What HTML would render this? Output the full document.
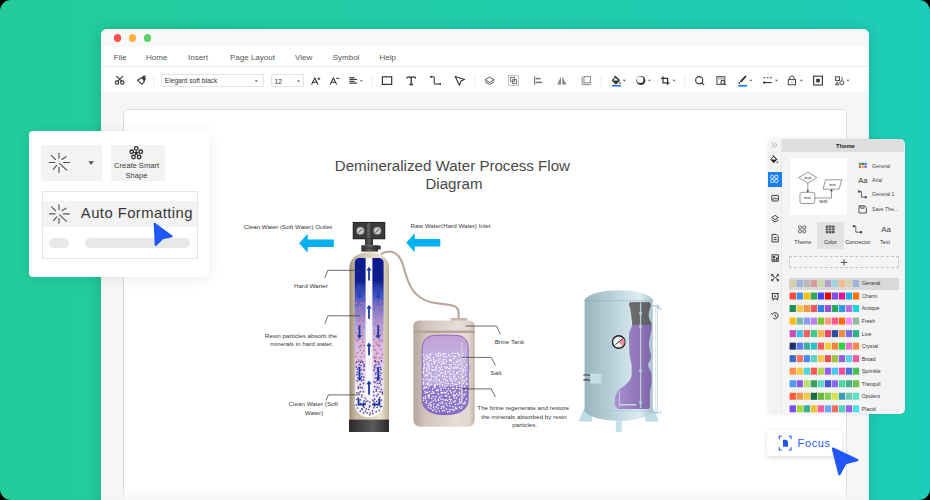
<!DOCTYPE html>
<html><head><meta charset="utf-8">
<style>
*{margin:0;padding:0;box-sizing:border-box}
html,body{width:930px;height:500px;overflow:hidden;background:#000}
body{position:relative;font-family:"Liberation Sans",sans-serif}
.a{position:absolute}
svg{position:absolute;left:0;top:0;overflow:visible}
#bg{left:0;top:0;width:930px;height:500px;border-radius:11px;background:linear-gradient(90deg,#23cc9a 0%,#22cdaa 50%,#1ecdb9 100%);overflow:hidden}
#win{left:101px;top:29px;width:768.2px;height:490px;background:#f5f6f8;border-radius:6px 6px 0 0;box-shadow:0 1px 14px rgba(0,50,35,.2);overflow:hidden}
#title{left:0;top:0;width:769px;height:18.2px;background:#f8f8f8}
.dot{width:7.2px;height:7.2px;border-radius:50%;top:5.4px}
#menu{left:0;top:18.2px;width:769px;height:19.4px;background:#fff;border-bottom:1px solid #ececec}
.mi{top:6.2px;font-size:8px;color:#555;white-space:nowrap}
#tools{left:0;top:38px;width:769px;height:25px;background:#fff}
#paper{left:22px;top:80px;width:724px;height:430px;background:#fff;border:1px solid #dedede;border-radius:5px}
.box{border:1px solid #e3e3e3;border-radius:2px;background:#fff}
</style></head><body>
<div id="bg" class="a">
 <div id="win" class="a">
  <div id="title" class="a">
   <div class="a dot" style="left:12.5px;background:#ff4f4f"></div>
   <div class="a dot" style="left:27.8px;background:#ffb142"></div>
   <div class="a dot" style="left:43px;background:#5ecf6a"></div>
  </div>
  <div id="menu" class="a">
   <div class="a mi" style="left:12.8px">File</div>
   <div class="a mi" style="left:45px">Home</div>
   <div class="a mi" style="left:87px">Insert</div>
   <div class="a mi" style="left:129px">Page Layout</div>
   <div class="a mi" style="left:194px">View</div>
   <div class="a mi" style="left:231.7px">Symbol</div>
   <div class="a mi" style="left:278.6px">Help</div>
  </div>
  <div id="tools" class="a"></div>
  <div id="paper" class="a"></div>
  <div class="a" style="left:0;top:457px;width:769px;height:14px;background:linear-gradient(180deg,rgba(246,247,249,0),rgba(244,245,247,.85))"></div>
 </div>
</div>

<!-- diagram -->
<svg width="930" height="500" viewBox="0 0 930 500">
 <defs>
  <linearGradient id="shell" x1="0" x2="1" y1="0" y2="0"><stop offset="0" stop-color="#9c8c78"/><stop offset=".14" stop-color="#c4b6a0"/><stop offset=".5" stop-color="#e0d4c0"/><stop offset=".8" stop-color="#ece2d0"/><stop offset="1" stop-color="#c0b09a"/></linearGradient>
  <linearGradient id="inner" x1="0" x2="0" y1="0" y2="1"><stop offset="0" stop-color="#0a1a8c"/><stop offset=".14" stop-color="#0e1e90"/><stop offset=".2" stop-color="#3444b4"/><stop offset=".3" stop-color="#6a6cd0"/><stop offset=".39" stop-color="#a496da"/><stop offset=".52" stop-color="#d2b4e4"/><stop offset=".64" stop-color="#dcc2e8"/><stop offset=".77" stop-color="#ecdcf2"/><stop offset=".89" stop-color="#f9f3fb"/><stop offset="1" stop-color="#ffffff"/></linearGradient>
  <linearGradient id="base" x1="0" x2="1"><stop offset="0" stop-color="#2a2a2a"/><stop offset=".6" stop-color="#5a5a5a"/><stop offset="1" stop-color="#2a2a2a"/></linearGradient>
  <linearGradient id="brine" x1="0" x2="1"><stop offset="0" stop-color="#b4a49c"/><stop offset=".2" stop-color="#d2c5be"/><stop offset=".7" stop-color="#e6ddd8"/><stop offset=".9" stop-color="#e2d8d2"/><stop offset="1" stop-color="#c4b4ac"/></linearGradient>
  <linearGradient id="salt" x1="0" x2="0" y1="0" y2="1"><stop offset="0" stop-color="#bfa2d8"/><stop offset=".2" stop-color="#c4acdc"/><stop offset=".21" stop-color="#c2b0e2"/><stop offset=".63" stop-color="#b6a6dc"/><stop offset=".64" stop-color="#8f78cc"/><stop offset="1" stop-color="#8870c8"/></linearGradient>
  <linearGradient id="hw" x1="0" x2="1"><stop offset="0" stop-color="#98b4bd"/><stop offset=".45" stop-color="#bcd4db"/><stop offset=".8" stop-color="#dcedf2"/><stop offset="1" stop-color="#a9c3cb"/></linearGradient>
  <linearGradient id="purp" x1="0" x2="1"><stop offset="0" stop-color="#ad95d6"/><stop offset="1" stop-color="#7d62a8"/></linearGradient>
 </defs>
 <!-- title -->
 <g font-family="Liberation Sans" fill="#484848" text-anchor="middle" font-size="15.1">
  <text x="452.4" y="170.6">Demineralized Water Process Flow</text>
  <text x="454" y="188.6">Diagram</text>
 </g>
 <g font-family="Liberation Sans" fill="#3a3a3a" font-size="6.25">
  <text x="243.8" y="229.3">Clean Water (Soft Water) Outlet</text>
  <text x="410.4" y="228.1">Raw Water(Hard Water) Inlet</text>
  <text x="294.1" y="288.1">Hard Warter</text>
  <text x="494.7" y="344.4">Brine Tank</text>
  <text x="490.6" y="375.1">Salt</text>
  <g text-anchor="middle">
   <text x="300.9" y="337.6">Resin particles absorb the</text>
   <text x="301.8" y="346.2">minerals in hard water.</text>
   <text x="313.3" y="406.4">Clean Water (Soft</text>
   <text x="314" y="415.1">Water)</text>
   <text x="523.2" y="409.8">The brine regenerate and restore</text>
   <text x="523.9" y="418.6">the minerals absorbed by resin</text>
   <text x="524.7" y="427.3">particles.</text>
  </g>
 </g>
 <!-- arrows -->
 <g fill="#00b0f0">
  <path d="M299.2 243.3L307.7 233.7V239.6H333.8V246.9H307.7V252.8Z"/>
  <path d="M406.2 242.7L414.8 233.2V238.9H440.3V246.6H414.8V252.2Z"/>
 </g>
 <!-- pipe -->
 <path d="M381 254.2C390 248.5 399 252 403 265C408 283 412 298 432 302.5C446 305.5 457.6 303 458.6 312V319" fill="none" stroke="#b9a49c" stroke-width="2.1"/>
 <!-- softener tank -->
 <linearGradient id="stem" x1="0" x2="1"><stop offset="0" stop-color="#2e2e2e"/><stop offset=".5" stop-color="#5a5a5a"/><stop offset="1" stop-color="#2e2e2e"/></linearGradient>
 <rect x="353.2" y="222.4" width="31.6" height="16.4" fill="#3d3939" stroke="#111" stroke-width=".9"/>
 <rect x="367.1" y="223" width="3.1" height="15.4" fill="#5c5c5c"/>
 <g><circle cx="360.4" cy="230.8" r="4" fill="#9a9a9a"/><circle cx="377.4" cy="230.8" r="4" fill="#9a9a9a"/>
 <circle cx="360.4" cy="230.8" r="3.1" fill="#c8c8c8"/><circle cx="377.4" cy="230.8" r="3.1" fill="#c8c8c8"/>
 <path d="M358.6 232.6l3.6 -3.6M375.6 232.6l3.6 -3.6" stroke="#222" stroke-width=".8"/></g>
 <rect x="365" y="239" width="8" height="6.4" fill="url(#stem)"/>
 <rect x="361.4" y="245.2" width="16.6" height="6.4" fill="url(#stem)"/>
 <path d="M361.4 248.2H377.8" stroke="#2a2a2a" stroke-width=".6"/>
 <rect x="377.4" y="245.6" width="3.4" height="4" rx="1.2" fill="#3a3a3a"/>
 <path d="M349.4 420V268C349.4 258 358 252.2 369.2 252.2C380.4 252.2 389 258 389 268V420z" fill="url(#shell)"/>
 <rect x="349" y="419.6" width="40" height="12.4" fill="url(#base)"/>
 <path d="M354.8 404V262.5a4.5 4.5 0 0 1 4.5 -4.5H379.1a4.5 4.5 0 0 1 4.5 4.5V404a13 13 0 0 1 -13 13h-2.8a13 13 0 0 1 -13 -13z" fill="url(#inner)"/>
 <g id="rd" fill="#c27888"><circle cx="356.4" cy="303.2" r="0.9"/><circle cx="361.1" cy="302.9" r="0.9"/><circle cx="363.3" cy="303.2" r="0.9"/><circle cx="375.7" cy="303.9" r="0.9"/><circle cx="380.9" cy="301.7" r="0.9"/><circle cx="359.6" cy="307.3" r="0.9"/><circle cx="362.0" cy="306.3" r="0.9"/><circle cx="364.0" cy="304.6" r="0.9"/><circle cx="373.9" cy="305.9" r="0.9"/><circle cx="378.4" cy="306.9" r="0.9"/><circle cx="382.1" cy="306.4" r="0.9"/><circle cx="356.5" cy="309.4" r="0.9"/><circle cx="359.8" cy="308.3" r="0.9"/><circle cx="377.7" cy="308.6" r="0.9"/><circle cx="381.3" cy="308.6" r="0.9"/><circle cx="359.5" cy="312.9" r="0.9"/><circle cx="360.2" cy="311.0" r="0.9"/><circle cx="376.0" cy="311.2" r="0.9"/><circle cx="377.4" cy="311.4" r="0.9"/><circle cx="358.8" cy="313.6" r="0.9"/><circle cx="364.1" cy="313.9" r="0.9"/><circle cx="375.8" cy="314.6" r="0.9"/><circle cx="379.5" cy="314.2" r="0.9"/><circle cx="359.5" cy="318.7" r="0.9"/><circle cx="361.0" cy="318.9" r="0.9"/><circle cx="364.2" cy="317.5" r="0.9"/><circle cx="374.4" cy="317.1" r="0.9"/><circle cx="379.4" cy="317.3" r="0.9"/><circle cx="381.4" cy="316.6" r="0.9"/><circle cx="359.2" cy="321.0" r="0.9"/><circle cx="362.9" cy="320.6" r="0.9"/><circle cx="378.1" cy="321.7" r="0.9"/><circle cx="379.6" cy="319.9" r="0.9"/><circle cx="358.9" cy="325.0" r="0.9"/><circle cx="360.7" cy="325.0" r="0.9"/><circle cx="374.5" cy="324.3" r="0.9"/><circle cx="377.9" cy="324.6" r="0.9"/><circle cx="382.3" cy="323.1" r="0.9"/><circle cx="358.7" cy="325.9" r="0.9"/><circle cx="363.5" cy="327.7" r="0.9"/><circle cx="376.7" cy="325.4" r="0.9"/><circle cx="379.4" cy="326.3" r="0.9"/><circle cx="358.4" cy="328.6" r="0.9"/><circle cx="361.2" cy="330.7" r="0.9"/><circle cx="373.8" cy="330.8" r="0.9"/><circle cx="379.2" cy="330.9" r="0.9"/><circle cx="380.6" cy="330.0" r="0.9"/><circle cx="356.4" cy="333.2" r="0.9"/><circle cx="359.4" cy="334.0" r="0.9"/><circle cx="362.1" cy="332.7" r="0.9"/><circle cx="374.3" cy="333.8" r="0.9"/><circle cx="376.5" cy="333.1" r="0.9"/><circle cx="381.4" cy="333.6" r="0.9"/><circle cx="358.0" cy="336.4" r="0.9"/><circle cx="362.6" cy="335.7" r="0.9"/><circle cx="376.6" cy="336.6" r="0.9"/><circle cx="379.3" cy="335.2" r="0.9"/><circle cx="356.3" cy="339.5" r="0.9"/><circle cx="358.7" cy="339.2" r="0.9"/><circle cx="362.0" cy="338.8" r="0.9"/><circle cx="373.8" cy="339.7" r="0.9"/><circle cx="376.2" cy="337.1" r="0.9"/><circle cx="379.7" cy="339.0" r="0.9"/><circle cx="357.4" cy="340.5" r="0.9"/><circle cx="362.8" cy="341.9" r="0.9"/><circle cx="376.1" cy="342.6" r="0.9"/><circle cx="379.7" cy="341.1" r="0.9"/><circle cx="382.2" cy="340.9" r="0.9"/><circle cx="360.9" cy="345.4" r="0.9"/><circle cx="363.9" cy="345.7" r="0.9"/><circle cx="377.3" cy="344.4" r="0.9"/><circle cx="379.8" cy="345.4" r="0.9"/><circle cx="359.6" cy="347.2" r="0.9"/><circle cx="360.4" cy="346.0" r="0.9"/><circle cx="373.8" cy="346.3" r="0.9"/><circle cx="378.5" cy="346.0" r="0.9"/><circle cx="360.3" cy="350.2" r="0.9"/><circle cx="363.7" cy="350.8" r="0.9"/><circle cx="373.4" cy="349.4" r="0.9"/><circle cx="375.5" cy="350.2" r="0.9"/><circle cx="380.9" cy="349.4" r="0.9"/><circle cx="357.5" cy="352.8" r="0.9"/><circle cx="362.2" cy="353.3" r="0.9"/><circle cx="376.4" cy="353.9" r="0.9"/><circle cx="377.5" cy="353.2" r="0.9"/><circle cx="382.4" cy="354.5" r="0.9"/><circle cx="356.1" cy="356.4" r="0.9"/><circle cx="361.0" cy="357.1" r="0.9"/><circle cx="364.6" cy="356.1" r="0.9"/><circle cx="373.9" cy="356.9" r="0.9"/><circle cx="376.1" cy="357.4" r="0.9"/><circle cx="381.7" cy="357.6" r="0.9"/><circle cx="358.3" cy="360.0" r="0.9"/><circle cx="361.1" cy="360.4" r="0.9"/><circle cx="375.2" cy="357.9" r="0.9"/><circle cx="379.5" cy="358.0" r="0.9"/><circle cx="356.0" cy="363.0" r="0.9"/><circle cx="358.9" cy="361.2" r="0.9"/><circle cx="363.3" cy="362.8" r="0.9"/><circle cx="374.8" cy="361.0" r="0.9"/><circle cx="376.1" cy="362.2" r="0.9"/><circle cx="379.7" cy="362.8" r="0.9"/></g>
 <g id="bd" fill="#4e46a6"><circle cx="356.9" cy="362.1" r="0.85"/><circle cx="360.5" cy="362.2" r="0.85"/><circle cx="362.2" cy="361.7" r="0.85"/><circle cx="375.3" cy="361.2" r="0.85"/><circle cx="378.3" cy="362.0" r="0.85"/><circle cx="381.6" cy="360.8" r="0.85"/><circle cx="359.3" cy="364.7" r="0.85"/><circle cx="360.9" cy="365.5" r="0.85"/><circle cx="364.4" cy="364.7" r="0.85"/><circle cx="374.7" cy="365.8" r="0.85"/><circle cx="376.0" cy="364.6" r="0.85"/><circle cx="378.8" cy="364.5" r="0.85"/><circle cx="356.4" cy="366.9" r="0.85"/><circle cx="358.8" cy="367.7" r="0.85"/><circle cx="363.8" cy="366.4" r="0.85"/><circle cx="374.7" cy="367.7" r="0.85"/><circle cx="377.2" cy="368.0" r="0.85"/><circle cx="380.3" cy="367.4" r="0.85"/><circle cx="357.4" cy="369.3" r="0.85"/><circle cx="361.2" cy="369.9" r="0.85"/><circle cx="363.9" cy="369.9" r="0.85"/><circle cx="373.9" cy="370.2" r="0.85"/><circle cx="377.6" cy="370.4" r="0.85"/><circle cx="380.7" cy="369.4" r="0.85"/><circle cx="357.5" cy="372.3" r="0.85"/><circle cx="359.1" cy="373.9" r="0.85"/><circle cx="362.0" cy="374.1" r="0.85"/><circle cx="376.0" cy="372.6" r="0.85"/><circle cx="379.0" cy="371.8" r="0.85"/><circle cx="381.0" cy="373.3" r="0.85"/><circle cx="356.8" cy="374.7" r="0.85"/><circle cx="361.6" cy="376.6" r="0.85"/><circle cx="375.6" cy="374.3" r="0.85"/><circle cx="379.9" cy="375.5" r="0.85"/><circle cx="360.5" cy="379.5" r="0.85"/><circle cx="363.8" cy="377.1" r="0.85"/><circle cx="375.1" cy="378.0" r="0.85"/><circle cx="378.5" cy="376.9" r="0.85"/><circle cx="381.8" cy="379.1" r="0.85"/><circle cx="357.2" cy="380.8" r="0.85"/><circle cx="361.8" cy="380.6" r="0.85"/><circle cx="363.5" cy="380.0" r="0.85"/><circle cx="374.1" cy="381.8" r="0.85"/><circle cx="377.0" cy="380.6" r="0.85"/><circle cx="380.0" cy="380.9" r="0.85"/><circle cx="360.2" cy="384.3" r="0.85"/><circle cx="363.5" cy="383.3" r="0.85"/><circle cx="375.7" cy="382.5" r="0.85"/><circle cx="377.8" cy="383.5" r="0.85"/><circle cx="380.0" cy="383.2" r="0.85"/><circle cx="358.4" cy="386.6" r="0.85"/><circle cx="360.5" cy="387.4" r="0.85"/><circle cx="374.9" cy="386.6" r="0.85"/><circle cx="377.2" cy="387.0" r="0.85"/><circle cx="381.0" cy="385.0" r="0.85"/><circle cx="358.4" cy="388.2" r="0.85"/><circle cx="362.4" cy="387.9" r="0.85"/><circle cx="376.4" cy="389.3" r="0.85"/><circle cx="379.0" cy="387.9" r="0.85"/><circle cx="381.6" cy="389.6" r="0.85"/><circle cx="356.9" cy="392.8" r="0.85"/><circle cx="360.3" cy="391.6" r="0.85"/><circle cx="363.4" cy="391.7" r="0.85"/><circle cx="373.6" cy="391.9" r="0.85"/><circle cx="376.3" cy="391.1" r="0.85"/><circle cx="380.2" cy="391.8" r="0.85"/><circle cx="382.3" cy="392.2" r="0.85"/><circle cx="358.9" cy="393.2" r="0.85"/><circle cx="361.8" cy="395.0" r="0.85"/><circle cx="374.0" cy="395.4" r="0.85"/><circle cx="378.0" cy="394.3" r="0.85"/><circle cx="382.5" cy="393.7" r="0.85"/><circle cx="358.1" cy="398.2" r="0.85"/><circle cx="361.7" cy="397.0" r="0.85"/><circle cx="365.5" cy="397.9" r="0.85"/><circle cx="376.7" cy="396.1" r="0.85"/><circle cx="379.6" cy="397.5" r="0.85"/><circle cx="356.7" cy="399.5" r="0.85"/><circle cx="360.3" cy="399.8" r="0.85"/><circle cx="364.0" cy="400.9" r="0.85"/><circle cx="366.4" cy="399.1" r="0.85"/><circle cx="367.9" cy="400.8" r="0.85"/><circle cx="372.7" cy="400.1" r="0.85"/><circle cx="374.7" cy="399.2" r="0.85"/><circle cx="378.7" cy="399.9" r="0.85"/><circle cx="381.5" cy="400.1" r="0.85"/><circle cx="358.7" cy="401.6" r="0.85"/><circle cx="360.5" cy="403.7" r="0.85"/><circle cx="365.3" cy="403.4" r="0.85"/><circle cx="366.2" cy="401.3" r="0.85"/><circle cx="369.9" cy="402.3" r="0.85"/><circle cx="373.9" cy="401.4" r="0.85"/><circle cx="376.8" cy="401.3" r="0.85"/><circle cx="378.7" cy="402.9" r="0.85"/><circle cx="356.2" cy="405.1" r="0.85"/><circle cx="358.8" cy="404.7" r="0.85"/><circle cx="363.3" cy="406.0" r="0.85"/><circle cx="364.7" cy="404.2" r="0.85"/><circle cx="369.7" cy="405.5" r="0.85"/><circle cx="372.7" cy="404.4" r="0.85"/><circle cx="374.9" cy="404.5" r="0.85"/><circle cx="379.0" cy="404.8" r="0.85"/><circle cx="381.7" cy="406.4" r="0.85"/><circle cx="357.6" cy="408.0" r="0.85"/><circle cx="361.8" cy="408.9" r="0.85"/><circle cx="364.1" cy="407.5" r="0.85"/><circle cx="366.3" cy="408.8" r="0.85"/><circle cx="369.4" cy="406.8" r="0.85"/><circle cx="373.7" cy="407.8" r="0.85"/><circle cx="377.1" cy="407.3" r="0.85"/><circle cx="380.5" cy="406.7" r="0.85"/><circle cx="360.2" cy="411.1" r="0.85"/><circle cx="362.1" cy="409.6" r="0.85"/><circle cx="365.4" cy="411.1" r="0.85"/><circle cx="368.6" cy="409.5" r="0.85"/><circle cx="372.5" cy="410.7" r="0.85"/><circle cx="376.2" cy="411.7" r="0.85"/><circle cx="379.3" cy="410.4" r="0.85"/><circle cx="363.6" cy="412.9" r="0.85"/><circle cx="367.0" cy="412.9" r="0.85"/><circle cx="370.2" cy="413.0" r="0.85"/><circle cx="372.8" cy="413.4" r="0.85"/><circle cx="369.7" cy="414.8" r="0.85"/></g>
 <path d="M365.6 258H372.4V397a3.4 3.4 0 0 1 -6.8 0z" fill="#fbf8fe"/>
 <g fill="#1c3aa6">
  <path d="M369 266.8l-2.6 3.6h1.7v10.2h1.8v-10.2h1.7z"/>
  <path d="M369 305l-2.6 3.6h1.7v10.2h1.8v-10.2h1.7z"/>
  <path d="M369 342.6l-2.6 3.6h1.7v9h1.8v-9h1.7z"/>
  <path d="M369 380.6l-2.6 3.6h1.7v10.6h1.8v-10.6h1.7z"/>
  <path d="M359.5 325.6v9.6h-1.7l2.6 3.6l2.6 -3.6h-1.7v-9.6z" transform="translate(-0.9 0)"/>
  <path d="M378.2 325.6v9.6h-1.7l2.6 3.6l2.6 -3.6h-1.7v-9.6z" transform="translate(-0.9 0)"/>
  <path d="M359.5 367v10.4h-1.7l2.6 3.6l2.6 -3.6h-1.7v-10.4z" transform="translate(-0.9 0)"/>
  <path d="M378.2 367v10.4h-1.7l2.6 3.6l2.6 -3.6h-1.7v-10.4z" transform="translate(-0.9 0)"/>
  <path d="M357.6 398.6h1.8v5h3.4v-1.8l3 2.7l-3 2.7v-1.8h-5.2z"/>
  <path d="M380.4 398.6h-1.8v5h-3.4v-1.8l-3 2.7l3 2.7v-1.8h5.2z"/>
 </g>
 <g fill="#2846b2">
  <path d="M358.3 284.4v10.8h-1.6l2.9 4l2.9 -4h-1.6v-10.8z"/>
  <path d="M377 284.4v10.8h-1.6l2.9 4l2.9 -4h-1.6v-10.8z"/>
 </g>
 <!-- leader lines -->
 <g fill="none" stroke="#3a3a3a" stroke-width=".75">
  <path d="M324.8 278L327.9 270.3H360.3"/>
  <path d="M324.8 323.9L327.9 315.8H360"/>
  <path d="M326 400.5L328.4 394.9H360.3"/>
 </g>
 <!-- brine tank -->
 <rect x="450.6" y="318" width="16.9" height="4" rx="1" fill="#c9b6ae"/>
 <path d="M413.4 426V326a5.5 5.5 0 0 1 5.5 -5.6H469.2a5.5 5.5 0 0 1 5.5 5.6V420a6.6 6.6 0 0 1 -6.6 6.7H420a6.6 6.6 0 0 1 -6.6 -6.7z" fill="url(#brine)"/>
 <rect x="413.4" y="330.6" width="61.3" height="2.4" fill="#b8a399"/>
 <path d="M433 335.6C440 334.8 452 335 458 335.6C464.5 336.4 468.2 341 468.2 348V362C469.2 365 469.2 370 468.2 373V400C468.2 409 460 414.7 445 414.7C430 414.7 422.2 409 422.2 400V350C422.2 341 426 336.3 433 335.6Z" fill="url(#salt)" stroke="#8c5fb0" stroke-width=".9"/>
 <g id="wd" fill="#fff"><circle cx="423.5" cy="354.7" r="0.8"/><circle cx="426.7" cy="355.2" r="0.8"/><circle cx="429.4" cy="355.1" r="0.8"/><circle cx="430.7" cy="354.1" r="0.8"/><circle cx="435.6" cy="354.5" r="0.8"/><circle cx="438.3" cy="353.4" r="0.8"/><circle cx="440.2" cy="353.7" r="0.8"/><circle cx="443.2" cy="354.4" r="0.8"/><circle cx="444.9" cy="353.6" r="0.8"/><circle cx="448.4" cy="355.1" r="0.8"/><circle cx="452.3" cy="353.5" r="0.8"/><circle cx="455.2" cy="353.4" r="0.8"/><circle cx="457.7" cy="353.4" r="0.8"/><circle cx="459.2" cy="355.0" r="0.8"/><circle cx="462.5" cy="353.6" r="0.8"/><circle cx="424.2" cy="357.7" r="0.8"/><circle cx="427.6" cy="357.1" r="0.8"/><circle cx="429.7" cy="357.6" r="0.8"/><circle cx="433.6" cy="357.7" r="0.8"/><circle cx="436.9" cy="356.2" r="0.8"/><circle cx="438.6" cy="356.0" r="0.8"/><circle cx="441.0" cy="355.7" r="0.8"/><circle cx="444.1" cy="356.9" r="0.8"/><circle cx="446.3" cy="357.1" r="0.8"/><circle cx="449.9" cy="356.3" r="0.8"/><circle cx="453.8" cy="356.6" r="0.8"/><circle cx="455.6" cy="356.6" r="0.8"/><circle cx="459.3" cy="355.7" r="0.8"/><circle cx="462.7" cy="355.6" r="0.8"/><circle cx="465.1" cy="357.4" r="0.8"/><circle cx="425.8" cy="359.3" r="0.8"/><circle cx="427.8" cy="358.2" r="0.8"/><circle cx="431.1" cy="360.1" r="0.8"/><circle cx="433.9" cy="359.7" r="0.8"/><circle cx="438.4" cy="360.1" r="0.8"/><circle cx="440.0" cy="358.8" r="0.8"/><circle cx="443.2" cy="359.8" r="0.8"/><circle cx="445.2" cy="359.7" r="0.8"/><circle cx="449.5" cy="359.9" r="0.8"/><circle cx="450.7" cy="360.1" r="0.8"/><circle cx="453.7" cy="358.8" r="0.8"/><circle cx="457.6" cy="360.1" r="0.8"/><circle cx="459.9" cy="360.1" r="0.8"/><circle cx="463.2" cy="358.8" r="0.8"/><circle cx="465.6" cy="358.5" r="0.8"/><circle cx="423.7" cy="360.9" r="0.8"/><circle cx="427.9" cy="362.7" r="0.8"/><circle cx="429.6" cy="360.7" r="0.8"/><circle cx="434.2" cy="361.7" r="0.8"/><circle cx="435.8" cy="361.1" r="0.8"/><circle cx="439.1" cy="362.3" r="0.8"/><circle cx="441.6" cy="361.5" r="0.8"/><circle cx="443.6" cy="362.5" r="0.8"/><circle cx="446.4" cy="361.6" r="0.8"/><circle cx="451.0" cy="360.8" r="0.8"/><circle cx="453.6" cy="362.6" r="0.8"/><circle cx="456.3" cy="362.3" r="0.8"/><circle cx="458.0" cy="361.5" r="0.8"/><circle cx="460.9" cy="362.4" r="0.8"/><circle cx="464.1" cy="361.5" r="0.8"/><circle cx="424.3" cy="364.9" r="0.8"/><circle cx="427.1" cy="364.0" r="0.8"/><circle cx="428.9" cy="364.6" r="0.8"/><circle cx="431.7" cy="363.7" r="0.8"/><circle cx="434.4" cy="363.4" r="0.8"/><circle cx="437.2" cy="365.2" r="0.8"/><circle cx="441.3" cy="364.4" r="0.8"/><circle cx="443.1" cy="363.8" r="0.8"/><circle cx="445.1" cy="363.6" r="0.8"/><circle cx="449.5" cy="364.9" r="0.8"/><circle cx="451.4" cy="364.7" r="0.8"/><circle cx="455.1" cy="364.5" r="0.8"/><circle cx="457.8" cy="364.7" r="0.8"/><circle cx="460.0" cy="364.6" r="0.8"/><circle cx="462.6" cy="364.1" r="0.8"/><circle cx="466.5" cy="364.5" r="0.8"/><circle cx="424.2" cy="367.6" r="0.8"/><circle cx="427.8" cy="366.8" r="0.8"/><circle cx="429.3" cy="366.7" r="0.8"/><circle cx="432.6" cy="367.0" r="0.8"/><circle cx="435.9" cy="367.3" r="0.8"/><circle cx="439.2" cy="367.2" r="0.8"/><circle cx="441.4" cy="366.9" r="0.8"/><circle cx="445.1" cy="367.3" r="0.8"/><circle cx="447.1" cy="367.3" r="0.8"/><circle cx="451.1" cy="367.0" r="0.8"/><circle cx="454.2" cy="367.6" r="0.8"/><circle cx="456.0" cy="366.7" r="0.8"/><circle cx="458.1" cy="367.3" r="0.8"/><circle cx="462.6" cy="366.5" r="0.8"/><circle cx="464.9" cy="367.1" r="0.8"/><circle cx="423.7" cy="368.4" r="0.8"/><circle cx="426.7" cy="369.3" r="0.8"/><circle cx="429.3" cy="368.9" r="0.8"/><circle cx="432.0" cy="369.7" r="0.8"/><circle cx="434.9" cy="369.6" r="0.8"/><circle cx="436.4" cy="368.3" r="0.8"/><circle cx="440.2" cy="369.4" r="0.8"/><circle cx="442.5" cy="369.5" r="0.8"/><circle cx="446.3" cy="368.1" r="0.8"/><circle cx="448.8" cy="368.5" r="0.8"/><circle cx="450.7" cy="368.3" r="0.8"/><circle cx="454.2" cy="368.4" r="0.8"/><circle cx="456.7" cy="368.1" r="0.8"/><circle cx="460.2" cy="368.8" r="0.8"/><circle cx="463.3" cy="369.3" r="0.8"/><circle cx="465.4" cy="370.0" r="0.8"/><circle cx="423.5" cy="371.4" r="0.8"/><circle cx="427.0" cy="371.4" r="0.8"/><circle cx="429.5" cy="372.3" r="0.8"/><circle cx="432.9" cy="370.6" r="0.8"/><circle cx="436.3" cy="370.7" r="0.8"/><circle cx="439.0" cy="371.2" r="0.8"/><circle cx="441.9" cy="372.5" r="0.8"/><circle cx="445.3" cy="371.4" r="0.8"/><circle cx="448.1" cy="371.9" r="0.8"/><circle cx="450.0" cy="370.8" r="0.8"/><circle cx="453.3" cy="371.7" r="0.8"/><circle cx="457.0" cy="372.6" r="0.8"/><circle cx="459.1" cy="371.2" r="0.8"/><circle cx="462.5" cy="370.5" r="0.8"/><circle cx="463.7" cy="371.7" r="0.8"/><circle cx="423.4" cy="373.3" r="0.8"/><circle cx="426.3" cy="374.9" r="0.8"/><circle cx="428.6" cy="373.9" r="0.8"/><circle cx="431.2" cy="373.6" r="0.8"/><circle cx="435.6" cy="373.8" r="0.8"/><circle cx="438.4" cy="374.9" r="0.8"/><circle cx="440.5" cy="373.5" r="0.8"/><circle cx="444.2" cy="374.0" r="0.8"/><circle cx="445.8" cy="373.6" r="0.8"/><circle cx="449.9" cy="374.0" r="0.8"/><circle cx="451.2" cy="374.0" r="0.8"/><circle cx="453.7" cy="374.3" r="0.8"/><circle cx="457.3" cy="373.6" r="0.8"/><circle cx="460.9" cy="374.7" r="0.8"/><circle cx="462.0" cy="374.1" r="0.8"/><circle cx="465.5" cy="375.0" r="0.8"/><circle cx="425.2" cy="376.0" r="0.8"/><circle cx="427.0" cy="375.8" r="0.8"/><circle cx="431.4" cy="376.1" r="0.8"/><circle cx="433.4" cy="376.5" r="0.8"/><circle cx="436.3" cy="376.7" r="0.8"/><circle cx="439.4" cy="375.7" r="0.8"/><circle cx="442.3" cy="376.1" r="0.8"/><circle cx="444.6" cy="376.2" r="0.8"/><circle cx="447.0" cy="376.6" r="0.8"/><circle cx="450.2" cy="376.2" r="0.8"/><circle cx="453.7" cy="376.7" r="0.8"/><circle cx="455.0" cy="376.0" r="0.8"/><circle cx="458.7" cy="377.4" r="0.8"/><circle cx="462.5" cy="376.6" r="0.8"/><circle cx="463.5" cy="377.1" r="0.8"/><circle cx="423.0" cy="379.2" r="0.8"/><circle cx="426.5" cy="379.3" r="0.8"/><circle cx="428.9" cy="379.9" r="0.8"/><circle cx="431.5" cy="378.8" r="0.8"/><circle cx="435.4" cy="378.3" r="0.8"/><circle cx="437.0" cy="379.7" r="0.8"/><circle cx="439.4" cy="379.7" r="0.8"/><circle cx="443.6" cy="378.8" r="0.8"/><circle cx="445.5" cy="379.6" r="0.8"/><circle cx="449.7" cy="378.2" r="0.8"/><circle cx="451.7" cy="379.1" r="0.8"/><circle cx="454.5" cy="378.6" r="0.8"/><circle cx="456.6" cy="379.2" r="0.8"/><circle cx="460.9" cy="378.1" r="0.8"/><circle cx="462.5" cy="379.7" r="0.8"/><circle cx="466.6" cy="379.3" r="0.8"/><circle cx="423.6" cy="382.0" r="0.8"/><circle cx="428.5" cy="382.6" r="0.8"/><circle cx="430.8" cy="380.5" r="0.8"/><circle cx="433.9" cy="380.9" r="0.8"/><circle cx="436.3" cy="382.5" r="0.8"/><circle cx="439.3" cy="380.7" r="0.8"/><circle cx="441.3" cy="382.4" r="0.8"/><circle cx="443.8" cy="381.7" r="0.8"/><circle cx="447.2" cy="380.7" r="0.8"/><circle cx="450.5" cy="380.5" r="0.8"/><circle cx="452.3" cy="381.2" r="0.8"/><circle cx="455.0" cy="380.5" r="0.8"/><circle cx="459.0" cy="382.0" r="0.8"/><circle cx="462.5" cy="380.7" r="0.8"/><circle cx="464.4" cy="381.1" r="0.8"/><circle cx="423.4" cy="383.9" r="0.8"/><circle cx="427.0" cy="383.7" r="0.8"/><circle cx="427.9" cy="384.4" r="0.8"/><circle cx="431.0" cy="384.2" r="0.8"/><circle cx="434.6" cy="384.8" r="0.8"/><circle cx="437.6" cy="384.2" r="0.8"/><circle cx="439.8" cy="384.1" r="0.8"/><circle cx="442.6" cy="384.5" r="0.8"/><circle cx="446.0" cy="383.2" r="0.8"/><circle cx="448.3" cy="383.7" r="0.8"/><circle cx="452.2" cy="383.3" r="0.8"/><circle cx="455.0" cy="384.3" r="0.8"/><circle cx="456.5" cy="384.3" r="0.8"/><circle cx="459.4" cy="383.1" r="0.8"/><circle cx="463.3" cy="383.4" r="0.8"/><circle cx="466.8" cy="383.9" r="0.8"/><circle cx="424.2" cy="387.1" r="0.8"/><circle cx="426.5" cy="386.9" r="0.8"/><circle cx="429.4" cy="385.7" r="0.8"/><circle cx="434.2" cy="386.8" r="0.8"/><circle cx="435.4" cy="385.6" r="0.8"/><circle cx="439.9" cy="386.8" r="0.8"/><circle cx="442.4" cy="385.7" r="0.8"/><circle cx="444.8" cy="386.1" r="0.8"/><circle cx="446.9" cy="386.1" r="0.8"/><circle cx="450.5" cy="386.1" r="0.8"/><circle cx="452.9" cy="385.6" r="0.8"/><circle cx="456.7" cy="386.8" r="0.8"/><circle cx="459.5" cy="386.3" r="0.8"/><circle cx="462.4" cy="386.5" r="0.8"/><circle cx="464.7" cy="386.6" r="0.8"/><circle cx="423.7" cy="388.7" r="0.8"/><circle cx="425.2" cy="387.9" r="0.8"/><circle cx="428.3" cy="387.9" r="0.8"/><circle cx="432.6" cy="388.9" r="0.8"/><circle cx="435.2" cy="387.8" r="0.8"/><circle cx="437.4" cy="389.8" r="0.8"/><circle cx="440.6" cy="388.8" r="0.8"/><circle cx="443.1" cy="388.0" r="0.8"/><circle cx="445.3" cy="388.2" r="0.8"/><circle cx="448.6" cy="388.7" r="0.8"/><circle cx="452.5" cy="388.2" r="0.8"/><circle cx="454.0" cy="388.4" r="0.8"/><circle cx="456.7" cy="388.5" r="0.8"/><circle cx="459.7" cy="388.9" r="0.8"/><circle cx="462.1" cy="389.8" r="0.8"/><circle cx="465.7" cy="389.9" r="0.8"/><circle cx="425.0" cy="391.8" r="0.8"/><circle cx="427.4" cy="392.4" r="0.8"/><circle cx="429.5" cy="391.8" r="0.8"/><circle cx="432.7" cy="391.8" r="0.8"/><circle cx="436.5" cy="390.7" r="0.8"/><circle cx="438.2" cy="390.4" r="0.8"/><circle cx="441.1" cy="390.5" r="0.8"/><circle cx="444.4" cy="392.4" r="0.8"/><circle cx="447.1" cy="391.0" r="0.8"/><circle cx="450.2" cy="390.9" r="0.8"/><circle cx="453.6" cy="391.9" r="0.8"/><circle cx="455.2" cy="390.8" r="0.8"/><circle cx="459.2" cy="392.3" r="0.8"/><circle cx="462.0" cy="391.2" r="0.8"/><circle cx="465.6" cy="390.3" r="0.8"/><circle cx="425.9" cy="392.9" r="0.8"/><circle cx="429.0" cy="394.9" r="0.8"/><circle cx="431.8" cy="393.5" r="0.8"/><circle cx="433.7" cy="392.9" r="0.8"/><circle cx="438.3" cy="393.9" r="0.8"/><circle cx="441.2" cy="392.9" r="0.8"/><circle cx="442.6" cy="392.9" r="0.8"/><circle cx="445.8" cy="392.9" r="0.8"/><circle cx="448.3" cy="393.7" r="0.8"/><circle cx="451.3" cy="392.9" r="0.8"/><circle cx="453.5" cy="394.9" r="0.8"/><circle cx="456.7" cy="393.9" r="0.8"/><circle cx="460.0" cy="393.9" r="0.8"/><circle cx="462.2" cy="393.5" r="0.8"/><circle cx="465.1" cy="394.0" r="0.8"/><circle cx="425.5" cy="396.6" r="0.8"/><circle cx="428.2" cy="395.7" r="0.8"/><circle cx="429.3" cy="396.4" r="0.8"/><circle cx="433.1" cy="396.5" r="0.8"/><circle cx="435.8" cy="396.6" r="0.8"/><circle cx="439.4" cy="397.2" r="0.8"/><circle cx="441.3" cy="396.2" r="0.8"/><circle cx="445.3" cy="395.8" r="0.8"/><circle cx="446.6" cy="395.9" r="0.8"/><circle cx="449.4" cy="396.9" r="0.8"/><circle cx="453.8" cy="395.9" r="0.8"/><circle cx="455.2" cy="395.4" r="0.8"/><circle cx="458.3" cy="395.5" r="0.8"/><circle cx="461.5" cy="396.5" r="0.8"/><circle cx="464.0" cy="395.4" r="0.8"/><circle cx="423.6" cy="397.9" r="0.8"/><circle cx="425.4" cy="398.4" r="0.8"/><circle cx="428.6" cy="398.0" r="0.8"/><circle cx="431.6" cy="398.4" r="0.8"/><circle cx="435.1" cy="399.0" r="0.8"/><circle cx="438.3" cy="399.2" r="0.8"/><circle cx="440.9" cy="399.0" r="0.8"/><circle cx="443.0" cy="399.5" r="0.8"/><circle cx="446.3" cy="399.8" r="0.8"/><circle cx="449.3" cy="399.3" r="0.8"/><circle cx="451.2" cy="399.5" r="0.8"/><circle cx="454.3" cy="398.0" r="0.8"/><circle cx="456.5" cy="398.1" r="0.8"/><circle cx="459.7" cy="399.2" r="0.8"/><circle cx="462.6" cy="397.9" r="0.8"/><circle cx="466.5" cy="399.0" r="0.8"/><circle cx="423.6" cy="400.3" r="0.8"/><circle cx="426.7" cy="401.0" r="0.8"/><circle cx="431.1" cy="402.3" r="0.8"/><circle cx="433.4" cy="400.7" r="0.8"/><circle cx="435.9" cy="401.0" r="0.8"/><circle cx="438.5" cy="400.3" r="0.8"/><circle cx="441.9" cy="402.0" r="0.8"/><circle cx="445.1" cy="400.4" r="0.8"/><circle cx="447.5" cy="400.6" r="0.8"/><circle cx="450.7" cy="401.2" r="0.8"/><circle cx="454.1" cy="401.9" r="0.8"/><circle cx="455.1" cy="400.9" r="0.8"/><circle cx="459.7" cy="401.2" r="0.8"/><circle cx="461.5" cy="401.2" r="0.8"/><circle cx="465.1" cy="402.3" r="0.8"/><circle cx="426.3" cy="402.9" r="0.8"/><circle cx="429.6" cy="403.6" r="0.8"/><circle cx="430.8" cy="404.8" r="0.8"/><circle cx="433.6" cy="404.0" r="0.8"/><circle cx="437.4" cy="404.6" r="0.8"/><circle cx="440.1" cy="403.2" r="0.8"/><circle cx="442.7" cy="403.1" r="0.8"/><circle cx="446.1" cy="403.5" r="0.8"/><circle cx="449.4" cy="403.2" r="0.8"/><circle cx="451.4" cy="403.2" r="0.8"/><circle cx="455.6" cy="404.5" r="0.8"/><circle cx="458.2" cy="404.0" r="0.8"/><circle cx="460.0" cy="403.0" r="0.8"/><circle cx="463.8" cy="403.8" r="0.8"/><circle cx="464.9" cy="403.1" r="0.8"/><circle cx="428.3" cy="405.6" r="0.8"/><circle cx="431.0" cy="405.9" r="0.8"/><circle cx="433.6" cy="407.1" r="0.8"/><circle cx="436.3" cy="406.9" r="0.8"/><circle cx="438.6" cy="405.2" r="0.8"/><circle cx="441.8" cy="406.5" r="0.8"/><circle cx="443.9" cy="406.0" r="0.8"/><circle cx="447.0" cy="405.2" r="0.8"/><circle cx="449.9" cy="406.0" r="0.8"/><circle cx="453.1" cy="406.7" r="0.8"/><circle cx="455.8" cy="407.3" r="0.8"/><circle cx="459.5" cy="407.2" r="0.8"/><circle cx="462.1" cy="406.6" r="0.8"/><circle cx="428.4" cy="407.8" r="0.8"/><circle cx="430.9" cy="408.4" r="0.8"/><circle cx="434.8" cy="409.3" r="0.8"/><circle cx="437.9" cy="408.3" r="0.8"/><circle cx="441.2" cy="408.3" r="0.8"/><circle cx="443.6" cy="407.8" r="0.8"/><circle cx="446.5" cy="409.1" r="0.8"/><circle cx="449.8" cy="409.6" r="0.8"/><circle cx="452.1" cy="409.5" r="0.8"/><circle cx="455.1" cy="409.0" r="0.8"/><circle cx="456.8" cy="408.8" r="0.8"/><circle cx="461.1" cy="408.2" r="0.8"/><circle cx="432.9" cy="410.4" r="0.8"/><circle cx="436.4" cy="411.3" r="0.8"/><circle cx="439.3" cy="411.0" r="0.8"/><circle cx="442.6" cy="410.6" r="0.8"/><circle cx="444.2" cy="410.7" r="0.8"/><circle cx="447.7" cy="412.1" r="0.8"/><circle cx="449.6" cy="411.5" r="0.8"/><circle cx="453.7" cy="410.6" r="0.8"/></g>
 <clipPath id="saltclip"><path d="M433 335.6C440 334.8 452 335 458 335.6C464.5 336.4 468.2 341 468.2 348V362C469.2 365 469.2 370 468.2 373V400C468.2 409 460 414.7 445 414.7C430 414.7 422.2 409 422.2 400V350C422.2 341 426 336.3 433 335.6Z"/></clipPath>
 <path d="M461.8 341.7V404" stroke="#cfcbd6" stroke-width="1.5"/>
 <g fill="none" stroke="#3a3a3a" stroke-width=".75">
  <path d="M465.5 326H496.5L500.3 334.2"/>
  <path d="M462 357.4H491.2L495.5 365.4"/>
  <path d="M462 388.9H491.2L495.5 397"/>
 </g>
 <!-- hot water tank -->
 <clipPath id="cut"><path d="M631 302.3H648.7Q650.7 302.3 650.7 304.3C650.5 309 648.2 312 648.5 316C648.8 320 651.7 322 651.7 326C651.7 332 649 338 649 344C649 350 651 352 651 357C651 361 648.2 362 648.2 365C648.2 368 650.7 370 651.2 373C651.6 377 651.6 380 651.6 382C651.6 386 649.9 389 649.9 393V407Q649.9 409 647.9 409H620C616.5 409 615 406.5 614.8 404C614.5 399.5 614.8 395.5 617.5 391.5C619.5 388.5 622.5 387.2 625 385.2C629 382 631.6 378.5 631.6 375C631.6 370 632 367 631.2 363C630.4 359 629.4 356 629.4 352C629.2 346 629 338 629 333C629.6 330 632.1 328 632.1 324C632.1 318 630.8 313 630.6 310C630.3 307 629 306 629 304.3Q629 302.3 631 302.3Z"/></clipPath>
 <linearGradient id="gry" x1="0" x2="1"><stop offset="0" stop-color="#7c7c7c"/><stop offset="1" stop-color="#5c5c5c"/></linearGradient>
 <path d="M578.4 421.5L585.5 405.5H591L592.5 421.5z" fill="#c2dce6"/>
 <path d="M659.2 421.5L652 405.5H646.5L645 421.5z" fill="#c2dce6"/>
 <rect x="615.8" y="412" width="6" height="19.8" fill="#c6dfe8"/>
 <path d="M584.6 299.5C590 293 604 290.2 619 290.2C634 290.2 648 293 652.8 299.5V411.5C648 418 634 420.8 619 420.8C604 420.8 590 418 584.6 411.5z" fill="url(#hw)"/>
 <path d="M584.6 300.7H652.8" stroke="#84adbb" stroke-width="1" stroke-dasharray="1.5 1.7"/><path d="M584.6 410.9H652.8" stroke="#9cc2d0" stroke-width="1" stroke-dasharray="1.5 1.7"/>
 <g clip-path="url(#cut)">
  <rect x="612" y="302" width="42" height="108" fill="url(#purp)"/>
  <rect x="612" y="302" width="42" height="22.8" fill="url(#gry)"/>
 </g>
 <path d="M640.6 302.6V408" stroke="#b9cdd8" stroke-width="1.3"/>
 <g fill="#b9cdd8"><rect x="639.3" y="311.5" width="2.6" height="3.4" rx=".6"/><rect x="639.3" y="324.6" width="2.6" height="3.4" rx=".6"/><rect x="639.3" y="369.2" width="2.6" height="3.4" rx=".6"/><rect x="639.3" y="400.8" width="2.6" height="3.4" rx=".6"/></g>
 <path d="M620.2 404.8H635.6" stroke="#d0d4e0" stroke-width="1.6" stroke-linecap="round"/><path d="M619.4 390.5V406.5" stroke="#c8ccd8" stroke-width="1"/>
 <circle cx="618.7" cy="342" r="6.2" fill="#f2f2f2" stroke="#1e1e1e" stroke-width="1.4"/>
 <path d="M618.7 342L623.4 338.2A5.4 5.4 0 0 1 622.6 345.9z" fill="#f08c9c"/>
 <path d="M615.4 344.6L622.8 338.6" stroke="#222" stroke-width=".9"/>
 <rect x="590.3" y="373.7" width="11.6" height="10.2" fill="#c7dde4" stroke="#a9c6cf" stroke-width=".5"/>
 <path d="M583.4 375.4c2 -1.2 4 -.6 6.4 .2M583.4 380.2c2 -1.2 4 -.6 6.4 .2" stroke="#3a3a3a" stroke-width="1.1" fill="none"/>
 <rect x="655.9" y="307" width="1.7" height="105.6" fill="#fbfdfe" stroke="#a9c4cd" stroke-width=".5"/>
 <path d="M652.6 305.6H657.4Q658.6 305.6 658.6 307V309M652.6 412.6H658.6" stroke="#a3c0ca" stroke-width="1.2" fill="none"/>
 <path d="M659.6 307.6L661.4 309L659.6 310.4M659.6 410.8L661.4 412.2L659.6 413.6" stroke="#a3c0ca" stroke-width=".8" fill="none"/>
</svg>
<!-- toolbar -->
<div class="a box" style="left:160.5px;top:74px;width:103px;height:13.2px"></div>
<div class="a" style="left:164.8px;top:77.4px;font-size:6.65px;color:#333;white-space:nowrap">Elegant soft black</div>
<div class="a box" style="left:270.5px;top:74.2px;width:33px;height:12.6px"></div>
<div class="a" style="left:274.6px;top:77.8px;font-size:6.8px;color:#333">12</div>
<svg width="930" height="500" viewBox="0 0 930 500" fill="none" stroke="#3a3a3a" stroke-width="1">
 <!-- separators -->
 <g stroke="#eaeaea"><path d="M153.7 74.5V86.5M372.1 74.5V86.5M474.6 74.5V86.5M601.3 74.5V86.5M684.8 74.5V86.5"/></g>
 <!-- carets -->
 <g fill="#666" stroke="none">
  <path d="M254.6 80.2h3.4l-1.7 1.8z"/><path d="M296.8 80.4h3.4l-1.7 1.8z"/>
  <path d="M359.8 80.2h3l-1.5 1.6z"/><path d="M622.8 79.8h3.2l-1.6 1.8z"/><path d="M647.9 79.8h3.2l-1.6 1.8z"/>
  <path d="M672.4 79.8h3.2l-1.6 1.8z"/><path d="M749.2 79.8h3.2l-1.6 1.8z"/><path d="M774.9 79.8h3.2l-1.6 1.8z"/>
  <path d="M799.8 79.8h3.2l-1.6 1.8z"/><path d="M846.4 79.8h3.2l-1.6 1.8z"/>
 </g>
 <!-- scissors -->
 <g stroke="#333" stroke-width="1.1"><path d="M116.3 76.2l5.6 5.1M123 76.2l-5.6 5.1"/><circle cx="117" cy="82.6" r="1.7"/><circle cx="122.3" cy="82.6" r="1.7"/></g>
 <!-- brush -->
 <g stroke="#333" stroke-width="1.1"><path d="M137.6 80.2l4.6 -2.6l2.2 3.8l-2.6 2.9z"/><path d="M142.2 77.6l1.5 -1.2l1.6 2.4l-1 1.6" fill="#333"/><path d="M144 76.5l1.9 -0.8"/></g>
 <!-- A+ A- -->
 <g stroke="#333" stroke-width="1.05"><path d="M311.6 84.4L314.8 77.9L318 84.4M312.7 82.2H317"/><path d="M317.6 78.7H320.2M318.9 77.4V80"/>
  <path d="M330.2 84.4L333.4 77.9L336.6 84.4M331.3 82.2H335.6"/><path d="M336.2 78.4H339.2"/></g>
 <!-- align -->
 <g stroke="#444" stroke-width="1.25"><path d="M349.4 77.6H354.2M349.4 79.4H357M349.4 81.3H354.6M349.4 83.1H357"/></g>
 <!-- rect -->
 <rect x="382.4" y="76.8" width="9.3" height="7.6" stroke="#333" stroke-width="1.2"/>
 <!-- T -->
 <g stroke="#333" stroke-width="1.3"><path d="M407 77.2h8.4M411.2 77.2v7.3M409.4 84.5h3.6"/><path d="M407 77v1.6M415.4 77v1.6" stroke-width="1"/></g>
 <!-- connector -->
 <g stroke="#333" stroke-width="1"><path d="M431.6 76.8h2.6v7.2h5.2"/></g><g fill="#333" stroke="none"><rect x="430.2" y="75.9" width="1.8" height="1.8"/><rect x="439.2" y="83.2" width="1.8" height="1.8"/></g>
 <!-- pointer -->
 <path d="M455.2 76.6l9.4 3l-3.6 1.4l-1.6 4.2z" stroke="#333" stroke-width="1.1" stroke-linejoin="round"/>
 <!-- layers -->
 <g stroke="#555" stroke-width="1"><path d="M489.6 77.2l4.6 2.6l-4.6 2.6l-4.6 -2.6z"/><path d="M485 81.8l4.6 2.6l4.6 -2.6"/></g>
 <!-- group -->
 <g><rect x="508.5" y="75.6" width="10" height="9.8" stroke="#c4c4c4" stroke-width="1"/><rect x="510.6" y="77.4" width="4" height="4" stroke="#777"/><rect x="512.6" y="79.6" width="4" height="4" stroke="#777"/></g>
 <!-- align left -->
 <g stroke="#777" stroke-width="1"><path d="M534.6 76v9"/><path d="M535.5 78.6h5" stroke-width="1.6"/><path d="M535.5 82.4h6.6" stroke-width="1.6"/></g>
 <!-- flip -->
 <g fill="#888" stroke="none"><path d="M557.2 84.6l3.8 -8.2v8.2z"/><path d="M562.2 76.4v8.2h4.2z"/></g>
 <!-- size -->
 <g stroke="#888" stroke-width="1"><path d="M582.2 76.6v8h8.4"/><rect x="584" y="76.6" width="6.4" height="6.2"/></g>
 <!-- fill -->
 <path d="M612.3 80.4L615.9 76.9L619.4 80.4L615.9 83.9z" stroke="#333" stroke-width="1.1" fill="#fff" stroke-linejoin="round"/>
 <path d="M612.3 80.4H619.4L615.9 83.9z" fill="#333" stroke="none"/>
 <path d="M614.3 75.9L619.2 80.7" stroke="#333" stroke-width="1.1"/>
 <circle cx="619.9" cy="83.1" r=".85" fill="#333" stroke="none"/>
 <rect x="612" y="85" width="8.9" height="1.5" fill="#1677ff" stroke="none"/>
 <!-- opacity -->
 <circle cx="640.9" cy="80.5" r="4.5" fill="#333" stroke="none"/>
 <circle cx="640.2" cy="79.8" r="3.25" fill="#fff" stroke="none"/>
 <!-- crop -->
 <g stroke="#333" stroke-width="1.2"><path d="M663 76.2v6.6h6.6M661 78.4h6.6v6.6"/></g>
 <!-- search -->
 <g stroke="#333" stroke-width="1.1"><circle cx="699.2" cy="80.2" r="3.6"/><path d="M701.8 82.8l2.4 2.4"/></g>
 <!-- find -->
 <rect x="716.9" y="76.6" width="7.9" height="7.8" stroke="#666" stroke-width="1.2"/>
 <rect x="717.5" y="77.2" width="6.7" height="2.4" fill="#bdbdbd" stroke="none"/>
 <circle cx="722.8" cy="82.3" r="1.9" fill="#fff" stroke="#444" stroke-width="1.1"/>
 <path d="M724.2 83.7L725.9 85.2" stroke="#444" stroke-width="1.1"/>
 <!-- pen -->
 <path d="M745.4 76.6L741 81.4" stroke="#333" stroke-width="1.9" stroke-linecap="round"/>
 <circle cx="739.3" cy="83" r=".9" fill="#444" stroke="none"/>
 <rect x="738.3" y="85" width="8.8" height="1.6" fill="#1677ff" stroke="none"/>
 <!-- line style -->
 <g stroke="#333" stroke-width="1.1"><path d="M763.6 77.8h1.8M766.8 77.8h1.8M770 77.8h1.8"/><path d="M763.2 82.6h8.6"/></g><path d="M762.8 82.6l2 -1.6v3.2z" fill="#333" stroke="none"/>
 <!-- lock -->
 <g stroke="#444" stroke-width="1"><rect x="788.3" y="79.6" width="7.2" height="5.2"/><path d="M789.8 79.6v-1.6a2.1 2.1 0 0 1 4.2 0v1.6"/></g><rect x="791.4" y="81.8" width="1" height="1" fill="#444" stroke="none"/>
 <!-- frame -->
 <g><rect x="813.6" y="76.2" width="8.8" height="8.8" stroke="#333" stroke-width="1.1"/><rect x="816.2" y="78.8" width="3.6" height="3.6" fill="#333" stroke="none"/></g>
 <!-- arrange -->
 <g stroke="#444" stroke-width="1"><rect x="835.6" y="76.8" width="3.8" height="3.8"/><circle cx="841.8" cy="82.8" r="2"/><path d="M835.6 84.8l1.6 -2.6l1.6 2.6z"/><path d="M841.2 76.8l1.8 1.8l-1.8 1.8"/></g>
</svg>


<!-- theme panel -->
<div class="a" style="left:768.2px;top:139.3px;width:136.6px;height:275.2px;border-radius:5px;background:#f4f4f4;box-shadow:0 0 4px rgba(0,30,20,.1);overflow:hidden">
 <div class="a" style="left:0;top:0;width:13.8px;height:276px;background:#f3f3f3;border-right:1px solid #e9e9e9"></div>
 <div class="a" style="left:13.8px;top:0;width:122.5px;height:12.4px;background:#dedede"></div>
 <div class="a" style="left:0;top:32.4px;width:13.6px;height:15.3px;background:#1a7ef6"></div>
 <div class="a" style="left:21.4px;top:18.9px;width:57px;height:57px;background:#fff"></div>
 <div class="a" style="left:48.8px;top:83px;width:27px;height:26.3px;background:#e2e2e2"></div>
 <div class="a" style="left:20.8px;top:117px;width:109.8px;height:11.7px;border:1px dashed #c4c4c4;border-radius:1px"></div>
 <div class="a" style="left:20.8px;top:138.3px;width:109.8px;height:12.1px;background:#d9d9d9"></div>
</div>
<div class="a" style="left:784.2px;top:142.6px;width:122.5px;text-align:center;font-size:5.8px;font-weight:bold;color:#222">Theme</div>
<svg width="930" height="500" viewBox="0 0 930 500" fill="none">
 <g font-family="Liberation Sans" font-size="5.1" fill="#444">
  <text x="872" y="167.5">General</text><text x="872" y="182.3">Arial</text><text x="872" y="196.3">General 1</text><text x="872" y="210.8">Save The...</text>
 </g>
 <g font-family="Liberation Sans" font-size="5.45" fill="#333" text-anchor="middle">
  <text x="802.8" y="243.9">Theme</text><text x="830.4" y="243.9">Color</text><text x="857.7" y="243.9">Connector</text><text x="885.1" y="243.9">Text</text>
 </g>
 <g font-family="Liberation Sans" font-size="5.2" fill="#333">
<rect x="789.60" y="280.00" width="6.3" height="7" fill="#d5cfae"/>
<rect x="796.63" y="280.00" width="6.3" height="7" fill="#9cb5d8"/>
<rect x="803.66" y="280.00" width="6.3" height="7" fill="#b9b9b9"/>
<rect x="810.69" y="280.00" width="6.3" height="7" fill="#d99c9c"/>
<rect x="817.72" y="280.00" width="6.3" height="7" fill="#cad9a6"/>
<rect x="824.75" y="280.00" width="6.3" height="7" fill="#b4a3ca"/>
<rect x="831.78" y="280.00" width="6.3" height="7" fill="#9fd3e0"/>
<rect x="838.81" y="280.00" width="6.3" height="7" fill="#f6bb8b"/>
<rect x="845.84" y="280.00" width="6.3" height="7" fill="#d8d3b4"/>
<rect x="852.87" y="280.00" width="6.3" height="7" fill="#9bb5dc"/>
<text x="861.8" y="285.40">General</text>
<rect x="789.60" y="292.53" width="6.3" height="7" fill="#ff4b3e"/>
<rect x="796.63" y="292.53" width="6.3" height="7" fill="#3d8cf0"/>
<rect x="803.66" y="292.53" width="6.3" height="7" fill="#ffc000"/>
<rect x="810.69" y="292.53" width="6.3" height="7" fill="#2eaa55"/>
<rect x="817.72" y="292.53" width="6.3" height="7" fill="#4343ff"/>
<rect x="824.75" y="292.53" width="6.3" height="7" fill="#e60000"/>
<rect x="831.78" y="292.53" width="6.3" height="7" fill="#7a50e0"/>
<rect x="838.81" y="292.53" width="6.3" height="7" fill="#e0179a"/>
<rect x="845.84" y="292.53" width="6.3" height="7" fill="#1aaeff"/>
<rect x="852.87" y="292.53" width="6.3" height="7" fill="#ff7000"/>
<text x="861.8" y="297.93">Charm</text>
<rect x="789.60" y="305.06" width="6.3" height="7" fill="#1f8c50"/>
<rect x="796.63" y="305.06" width="6.3" height="7" fill="#f5c850"/>
<rect x="803.66" y="305.06" width="6.3" height="7" fill="#f0954a"/>
<rect x="810.69" y="305.06" width="6.3" height="7" fill="#e85858"/>
<rect x="817.72" y="305.06" width="6.3" height="7" fill="#2d80e5"/>
<rect x="824.75" y="305.06" width="6.3" height="7" fill="#9650d6"/>
<rect x="831.78" y="305.06" width="6.3" height="7" fill="#28a862"/>
<rect x="838.81" y="305.06" width="6.3" height="7" fill="#2f9ee0"/>
<rect x="845.84" y="305.06" width="6.3" height="7" fill="#c06ae6"/>
<rect x="852.87" y="305.06" width="6.3" height="7" fill="#1ad6d6"/>
<text x="861.8" y="310.46">Antique</text>
<rect x="789.60" y="317.59" width="6.3" height="7" fill="#ffbb10"/>
<rect x="796.63" y="317.59" width="6.3" height="7" fill="#7ab8a0"/>
<rect x="803.66" y="317.59" width="6.3" height="7" fill="#8a9af5"/>
<rect x="810.69" y="317.59" width="6.3" height="7" fill="#b880f0"/>
<rect x="817.72" y="317.59" width="6.3" height="7" fill="#7ac92d"/>
<rect x="824.75" y="317.59" width="6.3" height="7" fill="#ff9a80"/>
<rect x="831.78" y="317.59" width="6.3" height="7" fill="#ff5a8a"/>
<rect x="838.81" y="317.59" width="6.3" height="7" fill="#ff6a00"/>
<rect x="845.84" y="317.59" width="6.3" height="7" fill="#ff8aff"/>
<rect x="852.87" y="317.59" width="6.3" height="7" fill="#8fb89f"/>
<text x="861.8" y="322.99">Fresh</text>
<rect x="789.60" y="330.12" width="6.3" height="7" fill="#c84fb8"/>
<rect x="796.63" y="330.12" width="6.3" height="7" fill="#3ec0e0"/>
<rect x="803.66" y="330.12" width="6.3" height="7" fill="#f26060"/>
<rect x="810.69" y="330.12" width="6.3" height="7" fill="#40c98a"/>
<rect x="817.72" y="330.12" width="6.3" height="7" fill="#f5b850"/>
<rect x="824.75" y="330.12" width="6.3" height="7" fill="#e8476a"/>
<rect x="831.78" y="330.12" width="6.3" height="7" fill="#2a4fa0"/>
<rect x="838.81" y="330.12" width="6.3" height="7" fill="#f58a45"/>
<rect x="845.84" y="330.12" width="6.3" height="7" fill="#7a6ae8"/>
<rect x="852.87" y="330.12" width="6.3" height="7" fill="#2fb08a"/>
<text x="861.8" y="335.52">Live</text>
<rect x="789.60" y="342.65" width="6.3" height="7" fill="#1f2f6a"/>
<rect x="796.63" y="342.65" width="6.3" height="7" fill="#5a78f0"/>
<rect x="803.66" y="342.65" width="6.3" height="7" fill="#3fae98"/>
<rect x="810.69" y="342.65" width="6.3" height="7" fill="#30c0c8"/>
<rect x="817.72" y="342.65" width="6.3" height="7" fill="#ff5a5a"/>
<rect x="824.75" y="342.65" width="6.3" height="7" fill="#f0cc40"/>
<rect x="831.78" y="342.65" width="6.3" height="7" fill="#f5843f"/>
<rect x="838.81" y="342.65" width="6.3" height="7" fill="#30d040"/>
<rect x="845.84" y="342.65" width="6.3" height="7" fill="#f070c8"/>
<rect x="852.87" y="342.65" width="6.3" height="7" fill="#f58a4a"/>
<text x="861.8" y="348.05">Crystal</text>
<rect x="789.60" y="355.18" width="6.3" height="7" fill="#3a6ac8"/>
<rect x="796.63" y="355.18" width="6.3" height="7" fill="#ff7060"/>
<rect x="803.66" y="355.18" width="6.3" height="7" fill="#4a8af5"/>
<rect x="810.69" y="355.18" width="6.3" height="7" fill="#5ad0c8"/>
<rect x="817.72" y="355.18" width="6.3" height="7" fill="#f5c850"/>
<rect x="824.75" y="355.18" width="6.3" height="7" fill="#f05050"/>
<rect x="831.78" y="355.18" width="6.3" height="7" fill="#a0c040"/>
<rect x="838.81" y="355.18" width="6.3" height="7" fill="#9060e0"/>
<rect x="845.84" y="355.18" width="6.3" height="7" fill="#5ad0f0"/>
<rect x="852.87" y="355.18" width="6.3" height="7" fill="#f05aa0"/>
<text x="861.8" y="360.58">Broad</text>
<rect x="789.60" y="367.71" width="6.3" height="7" fill="#ff9050"/>
<rect x="796.63" y="367.71" width="6.3" height="7" fill="#ffc840"/>
<rect x="803.66" y="367.71" width="6.3" height="7" fill="#48d8e0"/>
<rect x="810.69" y="367.71" width="6.3" height="7" fill="#ff5a5a"/>
<rect x="817.72" y="367.71" width="6.3" height="7" fill="#b0d850"/>
<rect x="824.75" y="367.71" width="6.3" height="7" fill="#9a5ae8"/>
<rect x="831.78" y="367.71" width="6.3" height="7" fill="#48c8f0"/>
<rect x="838.81" y="367.71" width="6.3" height="7" fill="#f0509a"/>
<rect x="845.84" y="367.71" width="6.3" height="7" fill="#5070e0"/>
<rect x="852.87" y="367.71" width="6.3" height="7" fill="#48c050"/>
<text x="861.8" y="373.11">Sprinkle</text>
<rect x="789.60" y="380.24" width="6.3" height="7" fill="#4a9af5"/>
<rect x="796.63" y="380.24" width="6.3" height="7" fill="#8a5ae0"/>
<rect x="803.66" y="380.24" width="6.3" height="7" fill="#b8e070"/>
<rect x="810.69" y="380.24" width="6.3" height="7" fill="#3aa060"/>
<rect x="817.72" y="380.24" width="6.3" height="7" fill="#60d8c0"/>
<rect x="824.75" y="380.24" width="6.3" height="7" fill="#4050e0"/>
<rect x="831.78" y="380.24" width="6.3" height="7" fill="#8a6af0"/>
<rect x="838.81" y="380.24" width="6.3" height="7" fill="#48d8a8"/>
<rect x="845.84" y="380.24" width="6.3" height="7" fill="#40b090"/>
<rect x="852.87" y="380.24" width="6.3" height="7" fill="#70c050"/>
<text x="861.8" y="385.64">Tranquil</text>
<rect x="789.60" y="392.77" width="6.3" height="7" fill="#ff5a40"/>
<rect x="796.63" y="392.77" width="6.3" height="7" fill="#f09a50"/>
<rect x="803.66" y="392.77" width="6.3" height="7" fill="#f5c850"/>
<rect x="810.69" y="392.77" width="6.3" height="7" fill="#1a6a40"/>
<rect x="817.72" y="392.77" width="6.3" height="7" fill="#6ab840"/>
<rect x="824.75" y="392.77" width="6.3" height="7" fill="#88d050"/>
<rect x="831.78" y="392.77" width="6.3" height="7" fill="#d8e050"/>
<rect x="838.81" y="392.77" width="6.3" height="7" fill="#3aa0b0"/>
<rect x="845.84" y="392.77" width="6.3" height="7" fill="#70c8b8"/>
<rect x="852.87" y="392.77" width="6.3" height="7" fill="#60e0c8"/>
<text x="861.8" y="398.17">Opulent</text>
<rect x="789.60" y="405.30" width="6.3" height="7" fill="#7a4af5"/>
<rect x="796.63" y="405.30" width="6.3" height="7" fill="#a8d840"/>
<rect x="803.66" y="405.30" width="6.3" height="7" fill="#3ab090"/>
<rect x="810.69" y="405.30" width="6.3" height="7" fill="#f0c040"/>
<rect x="817.72" y="405.30" width="6.3" height="7" fill="#ff5a9a"/>
<rect x="824.75" y="405.30" width="6.3" height="7" fill="#6aaaf5"/>
<rect x="831.78" y="405.30" width="6.3" height="7" fill="#f07060"/>
<rect x="838.81" y="405.30" width="6.3" height="7" fill="#50d0c0"/>
<rect x="845.84" y="405.30" width="6.3" height="7" fill="#9a60f0"/>
<rect x="852.87" y="405.30" width="6.3" height="7" fill="#48e0f0"/>
<text x="861.8" y="410.70">Placid</text>
 </g>
 <!-- plus -->
 <path d="M844 259.2V265.6M840.8 262.4H847.2" stroke="#444" stroke-width=".9"/>
 <!-- preview diagram -->
 <g stroke="#555" stroke-width=".6" fill="#fff">
  <path d="M807.8 172.1L816.8 177.6L807.8 183.1L798.8 177.6z"/>
  <rect x="800" y="192.3" width="14.8" height="11.2" rx="2"/>
  <path d="M825.6 179.8H841.7L839.1 189.2H823z"/>
  <path d="M807.8 183.1V190.4M814.8 198H831.5V191" fill="none"/>
 </g>
 <path d="M806.4 190.2H809.2L807.8 192.4z M830.1 191.2H832.9L831.5 189z" fill="#333"/>
 <g font-family="Liberation Sans" font-size="4.1" fill="#222" text-anchor="middle">
  <text x="807.8" y="178.9">text</text><text x="807.4" y="199.3">text</text><text x="832.4" y="185.8">text</text>
 </g>
 <text x="823.4" y="203" font-family="Liberation Sans" font-size="5" fill="#333" text-anchor="middle">text</text>
 <!-- right column icons -->
 <g fill="#555">
  <rect x="858.8" y="162.8" width="2.2" height="2.2" fill="#3aa05a"/><rect x="861.6" y="162.8" width="2.2" height="2.2" fill="#555"/><rect x="864.4" y="162.8" width="2.2" height="2.2" fill="#2b7de9"/>
  <rect x="858.8" y="165.6" width="2.2" height="2.2" fill="#e05050"/><rect x="861.6" y="165.6" width="2.2" height="2.2" fill="#f0a030"/><rect x="864.4" y="165.6" width="2.2" height="2.2" fill="#8a4ab0"/>
  <rect x="858.8" y="168.4" width="2.2" height="0" fill="#555"/>
 </g>
 <text x="858.2" y="183.3" font-family="Liberation Sans" font-size="7.6" fill="#333">Aa</text>
 <g stroke="#444" stroke-width=".8"><path d="M859.4 191.6H861.4V197.2H864.8"/><rect x="858.6" y="190.9" width="1.2" height="1.2" fill="#444"/><rect x="865" y="196.6" width="1.3" height="1.3" fill="#444"/></g>
 <g stroke="#444" stroke-width=".9"><path d="M859 205.8H864.6L866.4 207.6V213H859z"/><path d="M860.8 205.8V208.2H864V205.8"/></g>
 <!-- tab icons -->
 <g stroke="#444" stroke-width=".8"><rect x="798.6" y="226" width="2.8" height="2.8" rx=".8"/><rect x="802.8" y="226" width="2.8" height="2.8" rx=".8"/><rect x="798.6" y="230" width="2.8" height="2.8" rx=".8"/><rect x="802.8" y="230" width="2.8" height="2.8" rx=".8"/></g>
 <rect x="825.8" y="225.6" width="8.8" height="7.6" rx="1" fill="#555"/>
 <path d="M825.8 228.2H834.6M825.8 230.6H834.6M828.6 225.6V233.2M831.6 225.6V233.2" stroke="#e2e2e2" stroke-width=".6"/>
 <g stroke="#444" stroke-width=".8"><path d="M853.9 226.2H855.8V232.2H860.6"/><rect x="853.2" y="225.6" width="1.2" height="1.2" fill="#444"/><rect x="860.4" y="231.6" width="1.3" height="1.3" fill="#444"/></g>
 <text x="881.2" y="232.4" font-family="Liberation Sans" font-size="8" fill="#444">Aa</text>
 <!-- strip icons -->
 <path d="M771.8 142.6L774 145L771.8 147.4M774.6 142.6L776.8 145L774.6 147.4" stroke="#a0a0a0" stroke-width=".8"/>
 <path d="M770.8 159.4L773.8 156.4L776.8 159.4L773.8 162.6z" stroke="#222" stroke-width="1" fill="#fff" stroke-linejoin="round"/>
 <path d="M770.8 159.4H776.8L773.8 162.6z" fill="#222"/>
 <path d="M772.6 155L776.7 159.4" stroke="#222" stroke-width="1"/>
 <circle cx="777.4" cy="162.2" r=".75" fill="#222"/>
 <g stroke="#fff" stroke-width=".85"><rect x="770.6" y="175.3" width="3.1" height="3.1" rx="1"/><rect x="774.8" y="175.3" width="3.1" height="3.1" rx="1"/><rect x="770.6" y="179.4" width="3.1" height="3.1" rx="1"/><rect x="774.8" y="179.4" width="3.1" height="3.1" rx="1"/></g>
 <g stroke="#3c3c3c" stroke-width="1"><rect x="771.8" y="195.4" width="6.6" height="5.6" rx=".6"/><path d="M772.6 200L774.6 197.8L776 199.3L777 198.3L778 199.4"/></g>
 <g stroke="#3c3c3c" stroke-width=".95" fill="none"><path d="M775.1 215.4L778.5 217.5L775.1 219.6L771.7 217.5z"/><path d="M771.7 219.8L775.1 221.9L778.5 219.8"/></g>
 <g stroke="#3c3c3c" stroke-width="1" fill="none"><path d="M772 234.4H776.3L778.3 236.4V241.9H772z"/><path d="M773.6 237.6H776.6M773.6 239.6H776.6"/></g>
 <g stroke="#3c3c3c" stroke-width="1" fill="none"><path d="M772 254.8H778.4V261.4H772z"/></g><g fill="#3c3c3c"><rect x="773" y="256" width="2.2" height="2.2"/><rect x="775.8" y="257.4" width="1.8" height="3.2"/><rect x="773" y="259" width="2.2" height="1.6"/></g>
 <g stroke="#3c3c3c" stroke-width="1.05" fill="none"><path d="M771.8 274.6L774 276.8M778.4 274.6L776.2 276.8M771.8 280.6L774 278.4M778.4 280.6L776.2 278.4"/><path d="M774.2 277.6H776" stroke-width=".9"/><path d="M771.6 274.4H773.4M771.6 274.4V276.2M778.6 274.4H776.8M778.6 274.4V276.2M771.6 280.8H773.4M771.6 280.8V279M778.6 280.8H776.8M778.6 280.8V279" stroke-width=".8"/></g>
 <g stroke="#3c3c3c" stroke-width="1" fill="none"><path d="M771.6 293.6H778.8M772.4 293.6V298.8H778V293.6M773.4 298.8L772.8 300.6M777 298.8L777.6 300.6"/></g><path d="M774.4 295.1L776.6 296.3L774.4 297.5z" fill="#3c3c3c"/>
 <g stroke="#3c3c3c" stroke-width="1" fill="none"><path d="M772.4 314.2A3.1 3.1 0 1 1 773 318"/><path d="M775.2 314.3V316.3L776.6 317.1"/><path d="M771.2 313.2L772.5 314.6L773.8 313.3"/></g>
</svg>
<!-- left card -->
<div class="a" style="left:29px;top:131px;width:180px;height:145.8px;background:#fff;border-radius:4px;box-shadow:0 2px 14px rgba(0,20,10,.09)"></div>
<div class="a" style="left:41px;top:145.2px;width:61.4px;height:35.6px;background:#f3f3f3"></div>
<div class="a" style="left:111px;top:145px;width:54px;height:35.8px;background:#f3f3f3"></div>
<div class="a" style="left:108px;top:161.2px;width:57px;text-align:center;font-size:7.6px;line-height:10px;color:#3a3a3a;white-space:nowrap">Create Smart<br>Shape</div>
<div class="a" style="left:42.3px;top:190.5px;width:155.4px;height:68.2px;border:1px solid #e6e6e6;background:#fff"></div>
<div class="a" style="left:43.3px;top:200.5px;width:153.4px;height:26.2px;background:#f3f3f3"></div>
<div class="a" style="left:80.8px;top:204.5px;font-size:14.8px;letter-spacing:.46px;color:#363636;white-space:nowrap">Auto Formatting</div>
<div class="a" style="left:49.3px;top:238px;width:19.5px;height:10px;border-radius:5px;background:#e8e8e8"></div>
<div class="a" style="left:85px;top:238px;width:105.4px;height:10px;border-radius:5px;background:#e8e8e8"></div>
<svg width="930" height="500" viewBox="0 0 930 500" fill="none">
 <g stroke="#555" stroke-width="1.15" stroke-linecap="round">
  <path d="M59 153.3V158.2M59 167.3V172.5M49.3 162.5H54.8M63.5 162.5H69.5M51.4 155.6L55.5 159.5M62 159.5L66.2 156.8M53.4 169.3L56.6 165.4M59.6 163.4L66.7 170.2"/>
  <path d="M59 204.8V209.6M59 218.2V223.2M49.6 213.9H54.9M63.5 213.9H69.2M51.7 206.9L55.6 210.8M62 210.8L66 208.2M53.6 220.6L56.7 216.8M59.6 214.8L66.4 221.4"/>
 </g>
 <path d="M88.4 161.3H93.9L91.15 165z" fill="#555"/>
 <path d="M136.25 153.2L136.25 148.5M136.25 153.2L131.9 151.6M136.25 153.2L140.8 151.6M136.25 153.2L133.6 157M136.25 153.2L139 157" stroke="#333" stroke-width=".9"/>
 <g stroke="#333" stroke-width="1.35" fill="#fff">
  <circle cx="136.25" cy="148.4" r="1.75"/><circle cx="131.8" cy="151.7" r="1.75"/><circle cx="140.8" cy="151.7" r="1.75"/><circle cx="133.5" cy="157" r="1.75"/><circle cx="139.1" cy="157" r="1.75"/>
 </g>
 <rect x="134.9" y="151.9" width="2.7" height="2.7" fill="#333"/>
 <path d="M154.7 223.8L171.7 236.2L162.6 238.2L155.7 245z" fill="#2157f6" stroke="#2157f6" stroke-width="2" stroke-linejoin="round"/>
</svg>

<!-- focus -->
<div class="a" style="left:767px;top:430px;width:74.5px;height:26.4px;background:#fff;border-radius:4px;box-shadow:0 1.5px 5px rgba(0,0,0,.13)"></div>
<div class="a" style="left:797.6px;top:437.2px;font-size:10.9px;letter-spacing:.7px;color:#2157f6;white-space:nowrap">Focus</div>
<svg width="930" height="500" viewBox="0 0 930 500" fill="none">
 <path d="M779.2 439.2V436.3H781.8M788.6 436.3H791V439.2M791 447.2V450H788.6M781.8 450H779.2V447.2" stroke="#2157f6" stroke-width="1.1"/>
 <path d="M783 439.8H786.4L788 441.4V446.8H783z" fill="#2157f6"/>
 <path d="M833 448.6L857.2 460.2L845.4 463.2L839.4 474.2z" fill="#2157f6" stroke="#2157f6" stroke-width="2.4" stroke-linejoin="round"/>
</svg>
</body></html>
